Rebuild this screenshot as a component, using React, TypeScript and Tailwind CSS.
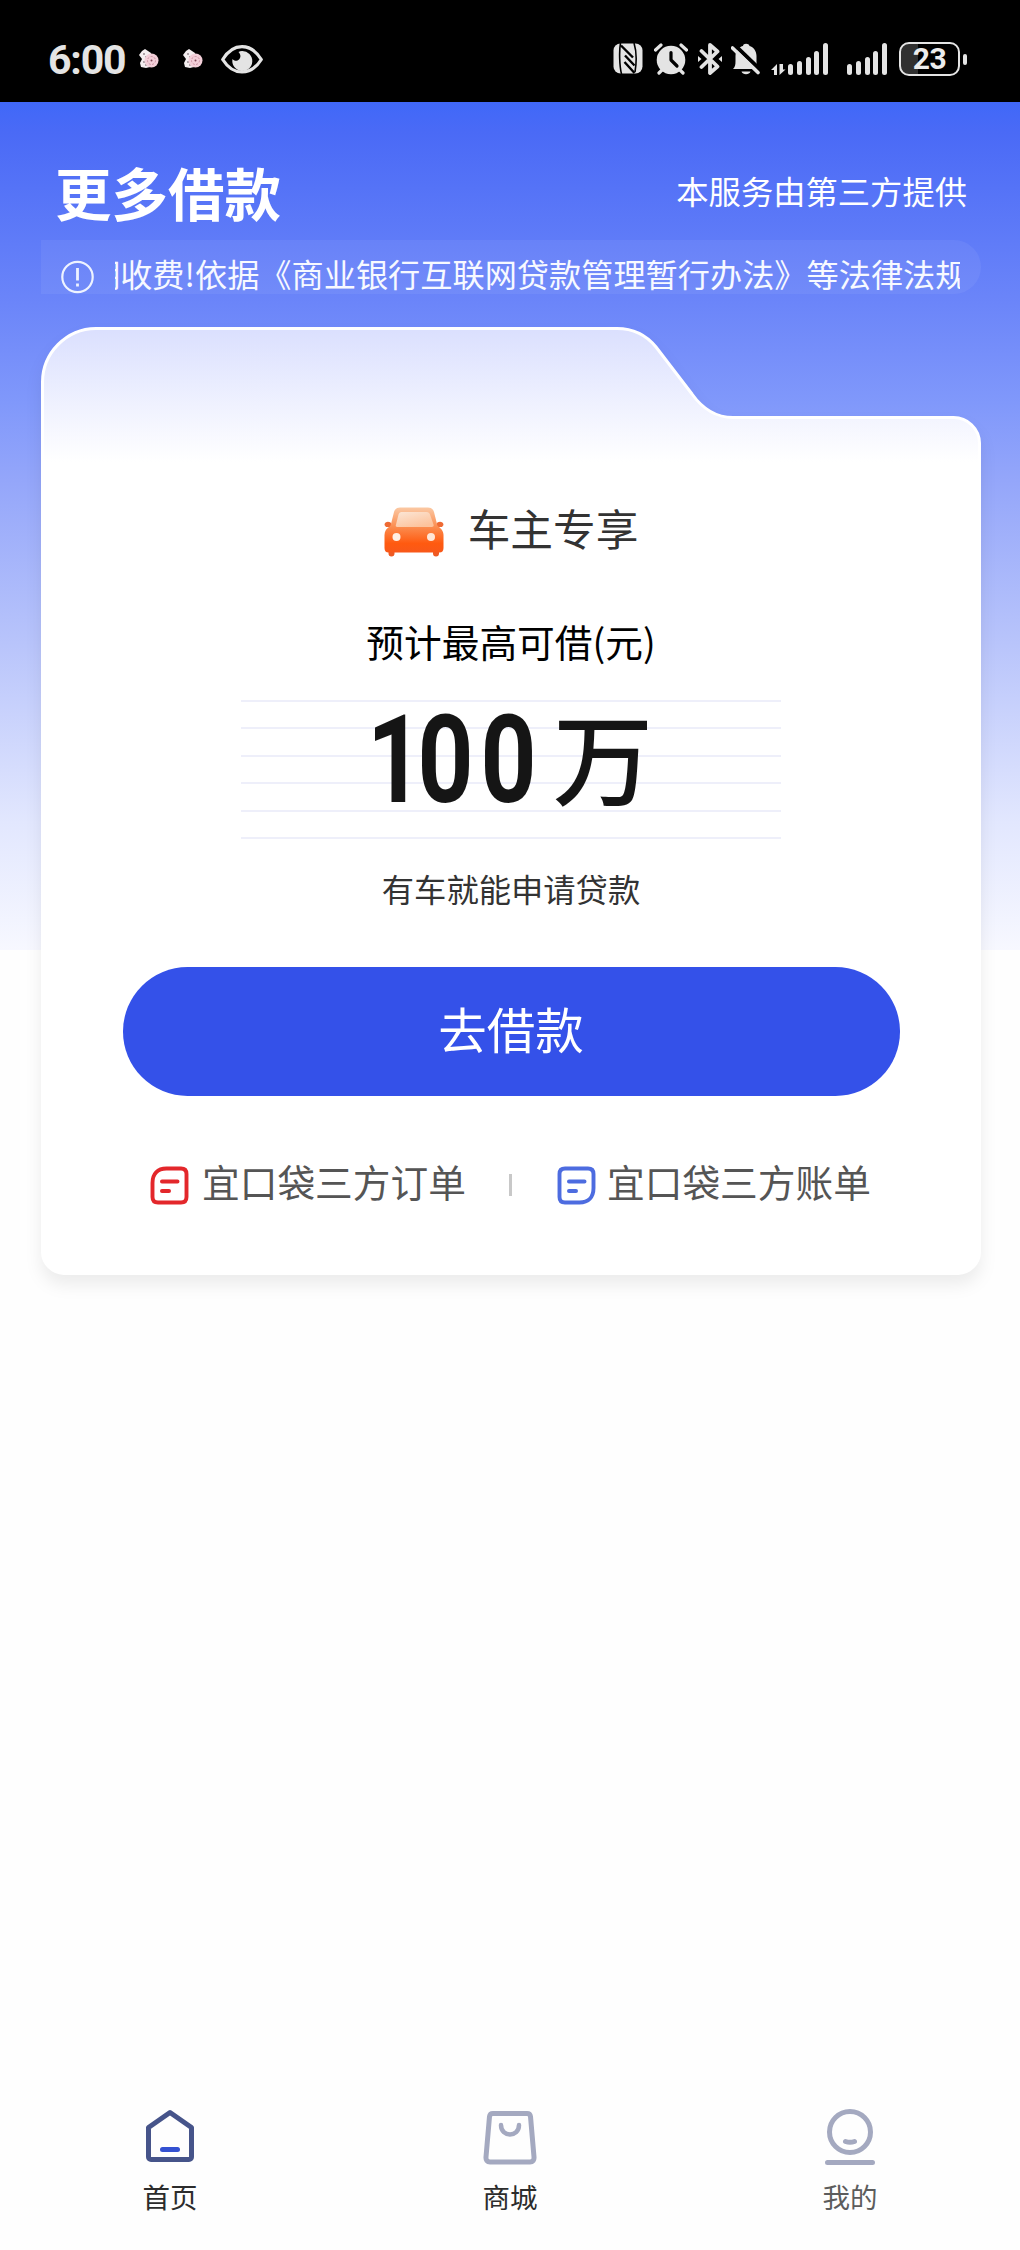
import type { ReactNode } from 'react';

const INK = '#e4e4e4';

function Flower() {
  return (
    <svg className="h-5 w-5" viewBox="0 0 20 20">
      <path d="M3 2 6 0 9 2 12 4 11 18 7 19 2 18 1 14 3 10 0 6Z" fill="#f4eef0" />
      <path d="M4 5h2M8 8H6M4 13h2M6 16h2" stroke="#6b5a62" strokeWidth="1" />
      <circle cx="12.5" cy="11.5" r="7" fill="#f3cfd9" />
      <circle cx="12.5" cy="11.5" r="4" fill="none" stroke="#c98fa0" strokeWidth="1" strokeDasharray="2 1.5" />
      <circle cx="12.5" cy="11.5" r="1" fill="#7d4655" />
    </svg>
  );
}

function Eye() {
  return (
    <svg className="h-[29px] w-[42px]" viewBox="0 0 42 29">
      <path d="M1.7 14.5C7 6 13.500 1.700 21 1.700S35 6 40.300 14.500C35 23 28.500 27 21 27S7 23 1.700 14.500Z" fill="none" stroke={INK} strokeWidth="3.200" strokeLinejoin="round" />
      <path d="M21 6a10 10 0 1 1-9.500 8c1.500 2 4.500 2.500 6.500.5s2-5-.5-7.500C18.500 6.300 19.700 6 21 6Z" fill={INK} />
    </svg>
  );
}

function Nfc() {
  return (
    <svg className="h-[31px] w-[30px]" viewBox="0 0 30 31">
      <rect x="0.500" y="0.500" width="29" height="30" rx="7" fill={INK} />
      <path d="M7.500 0C6 8 6.500 23 8.500 31M21 0C23.500 8 23.500 20 22 29" fill="none" stroke="#000" strokeWidth="1.600" />
      <path d="M8 2.500 20 14.500M12 12.500 21.500 22.500M11.500 19 21.500 30" fill="none" stroke="#000" strokeWidth="2.400" />
    </svg>
  );
}

function Alarm() {
  return (
    <svg className="h-[32px] w-[34px]" viewBox="0 0 34 32">
      <path d="M1.500 7 7 2M32.500 7 27 2M5 30l4-4M29 30l-4-4" stroke={INK} strokeWidth="3.200" strokeLinecap="round" />
      <circle cx="17" cy="17" r="14.300" fill={INK} />
      <path d="M17 9.500V17l6 6" fill="none" stroke="#000" strokeWidth="3.200" strokeLinecap="round" strokeLinejoin="round" />
    </svg>
  );
}

function Bluetooth() {
  return (
    <svg className="h-[32px] w-[24px]" viewBox="0 0 24 32">
      <path d="M3.500 8 19.500 23.500 12 30V2l7.500 6.500L3.500 24" fill="none" stroke={INK} strokeWidth="3.800" strokeLinejoin="round" strokeLinecap="round" />
      <path d="m0 13 3.500 3L0 19ZM24 13l-3.500 3 3.500 3Z" fill={INK} />
    </svg>
  );
}

function BellOff() {
  return (
    <svg className="h-[32px] w-[29px]" viewBox="0 0 29 32">
      <path d="M2 26c2-2 2.500-4 2.500-8v-5C4.500 7 9 3.500 12 3 12 0 18 0 18.500 3c4 1 7 5 7 10v6c0 3 1 5 2.500 7Z" fill={INK} />
      <path d="M10.500 28.500h9c-1 3.500-8 3.500-9 0Z" fill={INK} />
      <path d="M3 1.500 29.500 27" stroke="#000" strokeWidth="4" />
      <path d="M1.500 5 27 29.500" stroke={INK} strokeWidth="3.600" strokeLinecap="round" />
    </svg>
  );
}

function Bars() {
  return (
    <div className="flex h-8 w-10 items-end justify-between">
      <i className="h-[11px] w-[5px] rounded-full bg-[#e4e4e4]" />
      <i className="h-[14px] w-[5px] rounded-full bg-[#e4e4e4]" />
      <i className="h-[18px] w-[5px] rounded-full bg-[#e4e4e4]" />
      <i className="h-[24px] w-[5px] rounded-full bg-[#e4e4e4]" />
      <i className="h-[32px] w-[5px] rounded-full bg-[#e4e4e4]" />
    </div>
  );
}

function StatusBar() {
  return (
    <header className="flex h-[102px] shrink-0 items-start bg-black pr-[53px] pl-[48px]">
      <div className="mt-[36px] w-[78px] font-['Roboto','Noto_Sans_CJK_SC',sans-serif] text-[41px] leading-[48px] font-bold tracking-[-1.200px] text-[#e4e4e4]">
        6:00
      </div>
      <div className="mt-[49px] ml-[13px] flex gap-6">
        <Flower />
        <Flower />
      </div>
      <div className="mt-[45px] ml-[18px]"><Eye /></div>
      <div className="mt-[43px] ml-auto flex items-start">
        <Nfc />
        <div className="ml-[11px]"><Alarm /></div>
        <div className="ml-[10px]"><Bluetooth /></div>
        <div className="ml-[9px]"><BellOff /></div>
        <svg className="mt-[21px] ml-[11px] h-[11px] w-[15px]" viewBox="0 0 15 11">
          <path d="M6 11V0L0 6h3V11ZM8.500 0v11l6-5.500h-2.500V0Z" fill={INK} />
        </svg>
        <div className="ml-[2px]"><Bars /></div>
        <div className="ml-[19px]"><Bars /></div>
      </div>
      <div className="mt-[42px] ml-[12px] flex items-center gap-[3px]">
        <div className="flex h-[34px] w-[61px] items-center justify-center rounded-[10px] border-2 border-[#e4e4e4] bg-[linear-gradient(90deg,#303030_17px,#000_17px)] font-['Roboto',sans-serif] text-[30px] leading-[30px] font-bold tracking-[-0.5px] text-[#ececec]">
          23
        </div>
        <i className="h-[11px] w-1 rounded-full bg-[#e4e4e4]" />
      </div>
    </header>
  );
}

function NoticeIcon() {
  return (
    <svg className="h-[34px] w-[33px]" viewBox="0 0 33 34" fill="none" stroke="#eef3ff" strokeWidth="2.200">
      <circle cx="16.500" cy="17" r="15.200" />
      <path d="M16.500 8v12.500M16.500 23.500v3" strokeWidth="2.800" />
    </svg>
  );
}

function Car() {
  return (
    <svg className="h-[50px] w-[60px]" viewBox="0 0 60 50">
      <defs>
        <linearGradient id="body" x1="0" y1="0" x2="0" y2="1">
          <stop offset="0" stopColor="#fbc9a4" />
          <stop offset="0.450" stopColor="#fb8a4c" />
          <stop offset="0.800" stopColor="#ff5a10" />
          <stop offset="1" stopColor="#f8581a" />
        </linearGradient>
        <linearGradient id="glass" x1="0" y1="0" x2="0.600" y2="1">
          <stop offset="0" stopColor="#fbe6d6" />
          <stop offset="1" stopColor="#fdc39c" />
        </linearGradient>
      </defs>
      <path d="M4.500 42h6v4.500a3 3 0 0 1-6 0ZM49 42h6v4.500a3 3 0 0 1-6 0Z" fill="#ee5a24" />
      <path d="M0.500 18c0-4 6-4 7-1l-1 3H2ZM59.500 18c0-4-6-4-7-1l1 3H58Z" fill="#ee6a33" />
      <path d="M16 .5h28c3 0 5 1.500 6 4.500l3.500 14C57 21 59.500 24 59.500 28v13c0 3-1.500 4.500-4 4.500h-51C2 45.500.5 44 .5 41V28c0-4 2-7 6-9L10 5c1-3 3-4.500 6-4.500Z" fill="url(#body)" />
      <path d="M17.500 5h25c2 0 3 1 3.500 2.500l3.500 10c.5 1.500 0 2.500-2 2.500h-34c-2 0-2-1-1.500-2.500l2.500-10C15 6 16 5 17.500 5Z" fill="url(#glass)" />
      <circle cx="12.500" cy="30" r="4" fill="#fff0e4" />
      <circle cx="47" cy="30" r="4" fill="#ffe6d6" />
    </svg>
  );
}

function BillIcon({ color, flip }: { color: string; flip?: boolean }) {
  return (
    <svg className="h-[39px] w-[39px]" viewBox="0 0 39 39" fill="none" stroke={color} strokeWidth="3.900" strokeLinecap="round">
      <path
        d={
          flip
            ? 'M8 2.500h23c3.500 0 5.500 2 5.500 5.500v14c0 9-5 14.500-14 14.500H8c-3.500 0-5.500-2-5.500-5.500V8c0-3.500 2-5.500 5.500-5.500Z'
            : 'M16.500 2.500H31c3.500 0 5.500 2 5.500 5.500v23c0 3.500-2 5.500-5.500 5.500H8c-3.500 0-5.500-2-5.500-5.500V17c0-9 5-14.500 14-14.500Z'
        }
      />
      <path d="M12 15.500h15.500M12 25h7" strokeWidth="4" />
    </svg>
  );
}

function FolderShape() {
  return (
    <svg className="absolute top-0 left-0 h-[948px] w-[940px] drop-shadow-[0_10px_8px_rgba(0,0,0,0.07)]" viewBox="0 0 940 948">
      <defs>
        <linearGradient id="folder" gradientUnits="userSpaceOnUse" x1="0" y1="0" x2="0" y2="135">
          <stop offset="0" stopColor="#dadffe" />
          <stop offset="1" stopColor="#ffffff" />
        </linearGradient>
      </defs>
      <path
        d="M1.500 924V56A54 54 0 0 1 55 1.500H576C594 1.500 606 9 615 20L651 67C661 81 674 90.500 692 90.500H912A26 26 0 0 1 938.500 116V924A22 22 0 0 1 916 946.500H24A22 22 0 0 1 1.500 924Z"
        fill="url(#folder)"
        stroke="#fff"
        strokeWidth="3"
      />
    </svg>
  );
}

function RuledAmount() {
  return (
    <div className="relative mt-[36px] h-[139px] w-[540px]">
      <div className="flex h-full flex-col justify-between">
        {[0, 1, 2, 3, 4, 5].map((n) => (
          <i key={n} className="h-[2px] bg-[#eeeffa]" />
        ))}
      </div>
      <div className="absolute inset-0 text-[#151515]">
        <span className="absolute top-0 left-[126px] origin-left scale-x-[0.8] font-['Roboto',sans-serif] text-[122px] leading-[122px] font-bold whitespace-nowrap">
          <span className="tracking-[-7px]">1</span>
          <span className="tracking-[9px]">00</span>
        </span>
        <span className="absolute top-[5px] left-[312px] text-[100px] leading-[100px] font-medium">万</span>
      </div>
    </div>
  );
}

function LoanCard() {
  return (
    <section className="relative mt-[33px] ml-[41px] h-[948px] w-[940px] shrink-0">
      <FolderShape />
      <div className="relative flex h-full flex-col items-center pt-[178px]">
        <div className="flex h-[52px] items-center gap-[24px]">
          <div className="translate-y-px"><Car /></div>
          <h2 className="relative -top-1 text-[42.700px] leading-[50px] text-[#333]">车主专享</h2>
        </div>
        <p className="mt-[61px] text-[37.700px] leading-[46px] text-black">预计最高可借(元)</p>
        <RuledAmount />
        <p className="mt-[29px] text-[32.300px] leading-[40px] text-[#333]">有车就能申请贷款</p>
        <button className="mt-[59px] h-[129px] w-[777px] rounded-full bg-[#3451e9] pb-2 text-[48.500px] leading-[60px] text-white">
          去借款
        </button>
        <div className="mt-[65px] flex h-[48px] w-full items-center pl-[109px] text-[37.700px] leading-[48px] text-[#555]">
          <BillIcon color="#e3272b" />
          <span className="ml-[13px] w-[264px] -translate-y-1 whitespace-nowrap">宜口袋三方订单</span>
          <i className="ml-[43px] h-[22px] w-[3px] bg-[#c8c8c8]" />
          <div className="ml-[45px] h-[38px]"><BillIcon color="#4d6ce0" flip /></div>
          <span className="ml-[11px] -translate-y-1 whitespace-nowrap">宜口袋三方账单</span>
        </div>
      </div>
    </section>
  );
}

function Tab({ label, color, children }: { label: string; color: string; children: ReactNode }) {
  return (
    <a className="flex flex-1 flex-col items-center">
      <svg className="h-[60px] w-[60px]" viewBox="0 0 60 60" fill="none" strokeWidth="5" strokeLinecap="round" strokeLinejoin="round">
        {children}
      </svg>
      <span className={`mt-[11px] text-[27.500px] leading-[36px] ${color}`}>{label}</span>
    </a>
  );
}

function TabBar() {
  return (
    <nav className="mt-auto flex h-[143px]">
      <Tab label="首页" color="text-[#2c2c2c]">
        <path d="M30 5.500 51.500 20.500V50a2.500 2.500 0 0 1-2.500 2.500H11A2.500 2.500 0 0 1 8.500 50V20.500Z" stroke="#46548a" />
        <path d="M22.500 42.500h15" stroke="#3451d1" />
      </Tab>
      <Tab label="商城" color="text-[#2c2c2c]">
        <path d="M13 6.500H47a3.500 3.500 0 0 1 3.500 3L54 50c.3 3-1.200 5-4 5H10c-2.800 0-4.300-2-4-5L9.500 9.500a3.500 3.500 0 0 1 3.500-3Z" stroke="#a4a9c0" />
        <path d="M21 18c0 12.500 18 12.500 18 0" stroke="#a4a9c0" strokeWidth="4.500" />
      </Tab>
      <Tab label="我的" color="text-[#5c5c5c]">
        <circle cx="30" cy="25" r="20.500" stroke="#a4a9c0" />
        <path d="M25.500 34.500q4.500 1.700 9 0M7.500 55.500h45" stroke="#a4a9c0" />
      </Tab>
    </nav>
  );
}

export default function App() {
  return (
    <div className="flex h-[2250px] w-[1020px] flex-col overflow-hidden bg-[#fefefe] font-['Noto_Sans_CJK_SC',sans-serif]">
      <StatusBar />
      <main className="flex h-[848px] shrink-0 flex-col bg-[linear-gradient(180deg,#4068f8_0px,#4a6af6_30px,#6b85f9_200px,#8098fb_300px,#94a6fa_378px,#b8c4fb_540px,#e2e7fe_720px,#f7f8ff_848px)]">
        <div className="flex h-[138px] shrink-0 items-center justify-between pt-[38px] pr-[53px] pl-[55px] text-white">
          <h1 className="translate-y-px text-[56.500px] leading-[70px] font-bold">更多借款</h1>
          <p className="text-[32.300px] leading-[40px]">本服务由第三方提供</p>
        </div>
        <div className="ml-[41px] flex h-[54px] w-[940px] shrink-0 items-start rounded-r-full bg-white/6 pl-[20px]">
          <div className="mt-[20px]"><NoticeIcon /></div>
          <div className="mt-[12px] ml-[21px] flex h-[46px] w-[845px] justify-start overflow-hidden">
            <p className="ml-[-27px] shrink-0 text-[32.200px] leading-[42px] whitespace-nowrap text-[#f7f9ff]">
              期收费!依据《商业银行互联网贷款管理暂行办法》等法律法规
            </p>
          </div>
        </div>
        <LoanCard />
      </main>
      <TabBar />
    </div>
  );
}
